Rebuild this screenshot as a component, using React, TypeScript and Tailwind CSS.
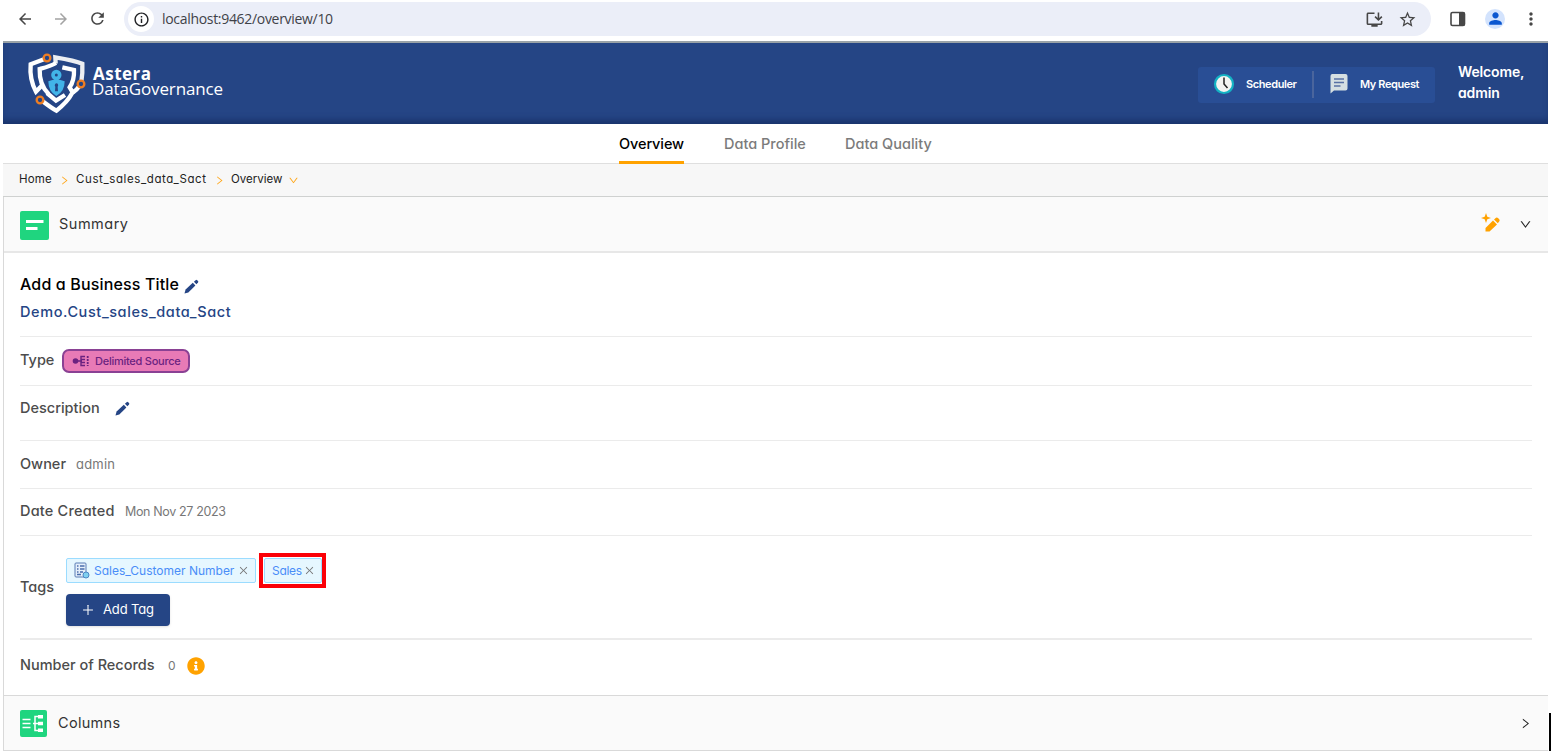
import type { ReactNode } from 'react';
import { clsx } from 'clsx';
import { AiOutlineClose, AiOutlineDown, AiOutlinePlus, AiOutlineRight } from 'react-icons/ai';
import { FaInfoCircle } from 'react-icons/fa';
import {
    MdArrowBack,
    MdArrowForward,
    MdInfoOutline,
    MdInstallDesktop,
    MdMoreVert,
    MdPerson,
    MdRefresh,
    MdStarBorder,
} from 'react-icons/md';

const tabs = [
    { name: 'Overview', width: 'w-[65px]', active: true },
    { name: 'Data Profile', width: 'w-[81px]', active: false },
    { name: 'Data Quality', width: 'w-[88px]', active: false },
];

function BrowserBar() {
    return (
        <div className="flex h-[41px] items-start pl-[16px] pt-[2px] text-[#474747]">
            <div className="flex h-[34px] items-center pb-[1px]">
                <MdArrowBack size={18} />
                <MdArrowForward size={18} className="ml-[18px] text-[#a3a3a3]" />
                <MdRefresh size={19} className="ml-[18px]" />
            </div>
            <div className="ml-[17px] flex h-[34px] w-[1307px] items-center rounded-full bg-[#ebeef8] pl-[4px] pr-[14px]">
                <div className="flex size-[26px] items-center justify-center rounded-full bg-white text-[#202124]">
                    <MdInfoOutline size={17} />
                </div>
                <span className="ml-[8px] pb-[2px] font-['Open_Sans',sans-serif] text-[14px] tracking-[-0.31px] text-[#3f4248]">
                    localhost:9462/overview/10
                </span>
                <MdInstallDesktop size={19} className="ml-auto" />
                <MdStarBorder size={19} className="ml-[14px]" />
            </div>
            <div className="flex h-[34px] items-center pb-[1px]">
                <svg width="16" height="16" viewBox="0 0 16 16" className="ml-[19px]">
                    <rect x="1" y="1.5" width="13.5" height="13" rx="1.5" fill="none" stroke="#474747" strokeWidth="1.6" />
                    <rect x="9" y="1.5" width="5.5" height="13" fill="#474747" />
                </svg>
                <div className="ml-[19px] flex size-[20px] items-center justify-center rounded-full bg-[#d3e3fd] text-[#0b57d0]">
                    <MdPerson size={19} />
                </div>
                <MdMoreVert size={20} className="ml-[16px]" />
            </div>
        </div>
    );
}

function ShieldLogo() {
    return (
        <svg width="60" height="63" viewBox="80 155 180 189" fill="none">
            <g stroke="#fff" strokeWidth="13">
                <path d="M131 177 L91 192 C88 225 94 250 107 274 L124 256" />
                <path d="M166 190 L165 171 C195 176 225 181 246 190 C247 210 246 226 243 244" stroke="#eceef2" />
                <path d="M167 188 C150 198 133 202 118 206 C117 235 125 262 145 281" />
                <path d="M186 201 L221 209 C222 232 217 248 208 261 L217 276 C203 302 187 317 168 331 C152 322 139 312 126 302" />
                <path d="M236 259 C231 267 226 271 218 276 M140 278 L167 301 L194 284" />
            </g>
            <g stroke="#ee7d22" strokeWidth="7" fill="#244586">
                <circle cx="140" cy="173" r="10" />
                <circle cx="242" cy="251" r="10" />
                <circle cx="119" cy="299" r="10" />
            </g>
            <circle cx="168" cy="224" r="10" stroke="#42b4e8" strokeWidth="11" />
            <path d="M144 243 Q168 232 193 243 Q193 274 168 287 Q144 274 144 243Z" fill="#42b4e8" />
            <path d="M168 249 a6 6 0 0 1 4 10 l1 14 h-9 l1 -14 a6 6 0 0 1 3 -10Z" fill="#244586" />
        </svg>
    );
}

function PencilIcon({ className }: { className?: string }) {
    return (
        <svg width="15" height="15" viewBox="0 0 15 15" fill="#254585" className={className}>
            <path d="M0.500 14.500 L1.600 10.600 L8.800 3.800 L11.400 6.400 L4.300 13.400Z" />
            <path d="M9.900 2.800 L11.600 1.200 Q12.400 0.500 13.200 1.200 L14 2 Q14.700 2.800 14 3.600 L12.400 5.300Z" />
        </svg>
    );
}

function Header() {
    return (
        <header className="flex h-[83px] items-start border-t-2 border-[#9aa3a8] bg-[#254585] pl-[24px] text-white shadow-[inset_0_-6px_6px_-2px_#19336b]">
            <div className="mt-[9px]">
                <ShieldLogo />
            </div>
            <div className="ml-[5px] mt-[23px] font-['Open_Sans',sans-serif] text-[17px] leading-[15px]">
                <div className="pl-[1px] font-bold tracking-[0.5px]">Astera</div>
                <div className="tracking-[-0.13px]">DataGovernance</div>
            </div>
            <div className="ml-auto mt-[24px] flex h-[36px] w-[237px] items-center rounded-[3px] bg-[#294e95] pb-[2px] text-[11px] font-semibold">
                <svg width="22" height="22" viewBox="0 0 22 22" className="ml-[15px]" fill="none">
                    <circle cx="11" cy="11" r="9" fill="#f4f4f2" stroke="#14b3c4" strokeWidth="2.2" />
                    <path d="M11 4.500V11l3.500 4" stroke="#222" strokeWidth="1.500" />
                </svg>
                <span className="ml-[11px] w-[52px] tracking-[-0.4px]">Scheduler</span>
                <div className="ml-[14px] h-[27px] w-[2px] bg-[#4a659d]" />
                <svg width="18" height="20" viewBox="0 0 18 20" className="ml-[16px]">
                    <path d="M2 0h13.500a2 2 0 0 1 2 2v12.500a2 2 0 0 1-2 2H4L0.500 19.500V2a2 2 0 0 1 1.500-2Z" fill="#d5dfe2" />
                    <path d="M4 5h10M4 8.500h10M4 12h6.500" stroke="#5871a5" strokeWidth="1.400" />
                </svg>
                <span className="ml-[12px] whitespace-nowrap tracking-[-0.4px]">My Request</span>
            </div>
            <div className="ml-[23px] mt-[18px] w-[90px] text-[14px] font-semibold leading-[21px] tracking-[-0.15px]">
                Welcome,
                <br />
                admin
            </div>
        </header>
    );
}

function Tabs() {
    return (
        <nav className="flex h-[40px] gap-[40px] border-b border-[#dfdfdf] pl-[616px]">
            {tabs.map((tab) => (
                <div
                    key={tab.name}
                    className={clsx(
                        'h-[40px] whitespace-nowrap pt-[9px] text-[14.500px] font-medium leading-[21px]',
                        tab.width,
                        tab.active ? 'border-b-[3px] border-[#ffa200] tracking-[-0.1px] text-black' : 'text-[#7b7b7b]',
                    )}
                >
                    {tab.name}
                </div>
            ))}
        </nav>
    );
}

function Breadcrumb() {
    return (
        <div className="flex h-[33px] items-center border-b border-[#cfd1d0] bg-[#f7f7f7] pl-[16px] text-[11.500px] text-[#222]">
            <span className="w-[33px] tracking-[0.15px]">Home</span>
            <AiOutlineRight size={11} className="ml-[7px] text-[#ffa71a]" />
            <span className="ml-[6px] w-[131px] whitespace-nowrap tracking-[0.6px]">Cust_sales_data_Sact</span>
            <AiOutlineRight size={11} className="ml-[7px] text-[#ffa71a]" />
            <span className="ml-[6px] w-[51px]">Overview</span>
            <AiOutlineDown size={11} className="ml-[6px] text-[#ffa71a]" />
        </div>
    );
}

function Row({ className, children }: { className: string; children: ReactNode }) {
    return <div className={clsx('mx-[16px] flex items-center whitespace-nowrap border-b border-[#ebebeb]', className)}>{children}</div>;
}

function Label({ className, children }: { className?: string; children: ReactNode }) {
    return <span className={clsx('text-[14.500px] font-medium leading-[20px] text-[#4c4c4c]', className)}>{children}</span>;
}

function BusinessTermIcon() {
    return (
        <svg width="16" height="17" viewBox="0 0 16 17" fill="none">
            <rect x="1" y="1" width="11" height="14" rx="1" fill="#e5effa" stroke="#5b7db5" />
            <path d="M3 4h1.500M6 4h4.500M3 7h1.500M6 7h4.500M3 10h1.500M6 10h3M3 12.500h4" stroke="#4a6ead" strokeWidth="1.300" />
            <circle cx="12" cy="13" r="3" fill="#7fd0ef" stroke="#4a86c5" />
        </svg>
    );
}

function Tag({ className, icon, children }: { className: string; icon?: ReactNode; children: ReactNode }) {
    return (
        <span className={clsx('flex h-[25px] items-center rounded-[2px] border border-[#9bdcff] bg-[#e6f7ff] pl-[7px] text-[12px] text-[#4a8df8]', className)}>
            {icon}
            {children}
            <AiOutlineClose size={11} className="ml-auto mr-[6px] text-[#777]" />
        </span>
    );
}

function Summary() {
    return (
        <section>
            <div className="flex h-[56px] items-center border-b-2 border-[#e7e7e7] bg-[#fafafa] pl-[16px] pr-[16px]">
                <svg width="29" height="29" viewBox="0 0 29 29" className="mt-[2px]">
                    <rect width="29" height="29" rx="2" fill="#1fd57f" />
                    <path d="M6 10.500h17.500M6 17.500h11.500" stroke="#fff" strokeWidth="3" />
                </svg>
                <span className="ml-[10px] text-[14.500px] tracking-[0.5px] text-[#333]">Summary</span>
                <svg width="20" height="20" viewBox="0 0 20 20" className="mb-[2px] ml-auto" fill="#ffa200">
                    <path d="M5 0 L6.300 3.700 L10 5 L6.300 6.300 L5 10 L3.700 6.300 L0 5 L3.700 3.700Z" />
                    <path d="M4.500 15 L12 7.500 L16 11.500 L8.500 18.500 L4.500 18.500Z M13 6.500 L15 4.800 Q16 4.200 17 5 L18.400 6.500 Q19 7.500 18.200 8.500 L16.800 10.300Z" />
                </svg>
                <AiOutlineDown size={13} className="ml-[18px] text-[#222]" />
            </div>

            <Row className="h-[84px] flex-wrap content-start pt-[19px]">
                <div className="flex h-[24px] w-full items-center text-[16px] font-medium text-black">
                    <span className="w-[159px] tracking-[0.15px]">Add a Business Title</span>
                    <PencilIcon className="ml-[5px] mt-[4px]" />
                </div>
                <div className="mt-[5px] text-[14.500px] font-medium leading-[21px] tracking-[0.6px] text-[#254585]">Demo.Cust_sales_data_Sact</div>
            </Row>
            <Row className="h-[49px]">
                <Label className="mb-[2px] w-[34px]">Type</Label>
                <span className="ml-[8px] flex h-[24px] w-[128px] items-center rounded-[7px] border-2 border-[#8a4194] bg-[#e87ab6] pl-[8px] text-[11px] font-medium tracking-[-0.25px] text-[#6b2280]">
                    <svg width="18" height="12" viewBox="0 0 18 12" className="mr-[5px]">
                        <circle cx="3.500" cy="6" r="2.800" fill="#6b2280" />
                        <path d="M6 6h4M13 1.500H9v9h4M9 4.500h4M9 7.500h4" fill="none" stroke="#6b2280" strokeWidth="1.400" />
                        <path d="M15.700 1v10" stroke="#6b2280" strokeWidth="1.800" strokeDasharray="2 1" />
                    </svg>
                    Delimited Source
                </span>
            </Row>
            <Row className="h-[55px] pb-[9px]">
                <Label className="mb-[2px] w-[80px]">Description</Label>
                <PencilIcon className="ml-[15px]" />
            </Row>
            <Row className="h-[48px]">
                <Label className="mb-[2px] w-[46px]">Owner</Label>
                <span className="ml-[10px] mt-[1px] text-[13px] tracking-[0.2px] text-[#777]">admin</span>
            </Row>
            <Row className="h-[47px]">
                <Label className="mb-[2px] w-[95px] tracking-[0.2px]">Date Created</Label>
                <span className="ml-[10px] mt-[1px] text-[12.500px] tracking-[-0.35px] text-[#777]">Mon Nov 27 2023</span>
            </Row>
            <Row className="h-[104px] border-b-2">
                <Label className="w-[34px]">Tags</Label>
                <div className="ml-[12px] mt-[10px]">
                    <div className="flex gap-[8px]">
                        <Tag className="w-[190px]" icon={<span className="mr-[4px]"><BusinessTermIcon /></span>}>
                            Sales_Customer Number
                        </Tag>
                        <div className="relative">
                            <Tag className="w-[58px] tracking-[-0.3px]">Sales</Tag>
                            <div className="absolute -bottom-[5px] -left-[5px] -right-[4px] -top-[5px] border-4 border-[#fb0007]" />
                        </div>
                    </div>
                    <button className="mt-[11px] flex h-[32px] w-[104px] items-center rounded-[4px] bg-[#254585] pl-[15px] text-[13px] tracking-[-0.15px] text-white shadow-sm">
                        <AiOutlinePlus size={14} className="mr-[8px]" />
                        Add Tag
                    </button>
                </div>
            </Row>
            <div className="flex h-[55px] items-center whitespace-nowrap px-[16px] pb-[3px]">
                <Label className="mb-[2px] w-[136px]">Number of Records</Label>
                <span className="ml-[12px] text-[12px] text-[#777]">0</span>
                <FaInfoCircle size={18} className="ml-[11px] text-[#ffa200]" />
            </div>
        </section>
    );
}

function Columns() {
    return (
        <section className="flex h-[56px] items-center border-y border-[#d9d9d9] bg-[#fafafa] pl-[16px] pr-[16px]">
            <svg width="27" height="27" viewBox="0 0 27 27">
                <rect width="27" height="27" rx="2" fill="#1fd57f" />
                <path d="M2.500 9.500h8M2.500 13.500h8M2.500 17.500h8M13 13.500h6M19 6.500h-4v14h4" fill="none" stroke="#fff" strokeWidth="1.500" />
                <path d="M18 5h5v3.500h-5zM18 11.700h5v3.500h-5zM18 18.500h5v3.500h-5z" fill="#fff" />
            </svg>
            <span className="ml-[11px] text-[14.500px] tracking-[0.3px] text-[#333]">Columns</span>
            <AiOutlineRight size={13} className="ml-auto text-[#222]" />
        </section>
    );
}

export default function App() {
    return (
        <div className="flex h-[752px] w-[1551px] flex-col overflow-hidden bg-white font-[Inter,sans-serif] [font-feature-settings:'cv11']">
            <BrowserBar />
            <div className="flex">
                <div className="ml-[3px] w-[1545px]">
                    <Header />
                    <Tabs />
                    <Breadcrumb />
                    <main className="border-l border-[#d9d9d9]">
                        <Summary />
                        <Columns />
                    </main>
                </div>
                <div className="ml-[1px] h-[38px] w-[2px] self-end bg-black" />
            </div>
        </div>
    );
}
